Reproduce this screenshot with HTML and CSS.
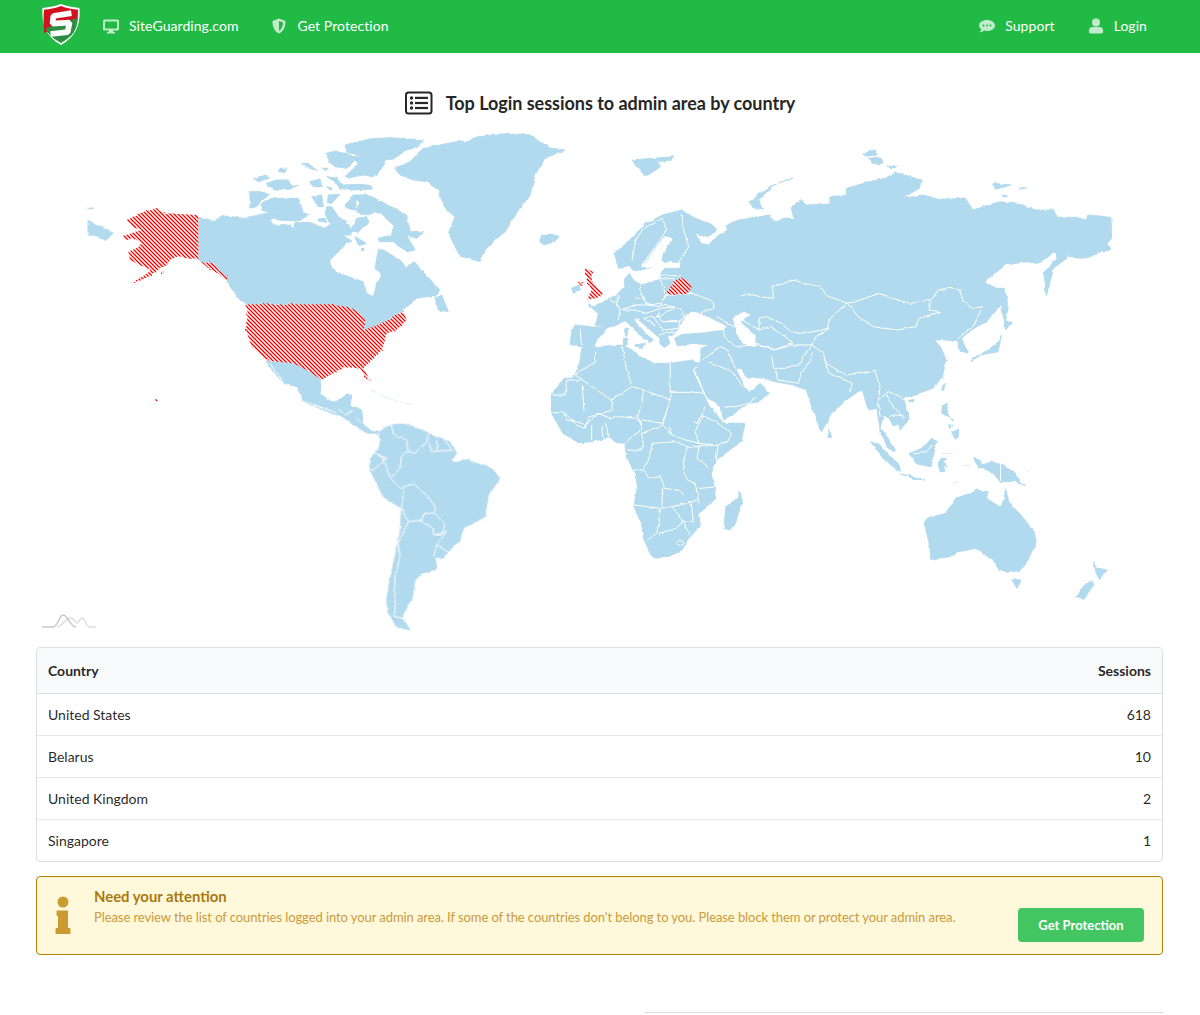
FILE: index.html
```html
<!DOCTYPE html>
<html lang="en">
<head>
<meta charset="utf-8">
<title>Top Login sessions to admin area by country</title>
<link rel="stylesheet" href="styles.css">
</head>
<body>
<header class="topbar">
  <svg class="logo" viewBox="0 0 40 44" aria-hidden="true">
    <path class="logo-edge" d="M20 .5C26 3 32 4 39.500 4.500C40.500 20 37 34 20 43.500C3 34-.5 20 .5 4.500C8 4 14 3 20 .5Z"/>
    <path class="logo-red" d="M20 2.500C26 5 32 6 38 6.500L37.500 17L2.500 31C1.500 23 1.500 14 2 6.500C8 6 14 5 20 2.500Z"/>
    <path class="logo-green" d="M37.800 15C37 28 32 35 20 41.500C12 37 6 32 3.500 26Z"/>
    <polyline class="logo-s" points="31,10 12,13 11,21 29,20 27,30 9,32"/>
  </svg>
  <nav class="nav">
    <a class="nav-item">
      <svg class="nav-icon" viewBox="0 0 16 16" aria-hidden="true"><path d="M1.500 1.500h13A1.500 1.500 0 0 1 16 3v8a1.500 1.500 0 0 1-1.500 1.500H10l.5 1.500h1.500v1.500H4V14h1.500l.5-1.500H1.500A1.500 1.500 0 0 1 0 11V3a1.500 1.500 0 0 1 1.500-1.500ZM2 3.500v7h12v-7Z" fill-rule="evenodd"/></svg>
      <span>SiteGuarding.com</span>
    </a>
    <a class="nav-item">
      <svg class="nav-icon" viewBox="0 0 16 16" aria-hidden="true"><path d="M8 0.500L14.500 3C14.500 9 12.500 13.500 8 15.500C3.500 13.500 1.500 9 1.500 3ZM8 3V13C10.500 11.500 12 8.500 12 4.600Z" fill-rule="evenodd"/></svg>
      <span>Get Protection</span>
    </a>
    <span class="nav-spacer"></span>
    <a class="nav-item">
      <svg class="nav-icon" viewBox="0 0 16 16" aria-hidden="true"><path d="M8 2C12.400 2 16 4.400 16 7.500S12.400 13 8 13C7 13 6 12.900 5 12.600C4 13.600 2.500 14.300 .5 14.300C1.500 13.300 2.200 12.300 2.300 11.200C.9 10.200 0 9 0 7.500C0 4.400 3.600 2 8 2ZM4.500 6.500a1 1 0 1 0 0 2a1 1 0 0 0 0-2ZM8 6.500a1 1 0 1 0 0 2a1 1 0 0 0 0-2ZM11.500 6.500a1 1 0 1 0 0 2a1 1 0 0 0 0-2Z" fill-rule="evenodd"/></svg>
      <span>Support</span>
    </a>
    <a class="nav-item">
      <svg class="nav-icon" viewBox="0 0 16 16" aria-hidden="true"><circle cx="8" cy="4.500" r="4"/><path d="M4.500 9h7A3.500 3.500 0 0 1 15 12.500V14a1.500 1.500 0 0 1-1.500 1.500h-11A1.500 1.500 0 0 1 1 14v-1.500A3.500 3.500 0 0 1 4.500 9Z"/></svg>
      <span>Login</span>
    </a>
  </nav>
</header>

<main class="page">
  <h1 class="title">
    <svg class="title-icon" viewBox="0 0 28 24" aria-hidden="true">
      <rect class="title-frame" x="1" y="1.500" width="25.500" height="21" rx="2.500"/>
      <circle cx="6.500" cy="7" r="1.700"/><circle cx="6.500" cy="12" r="1.700"/><circle cx="6.500" cy="17" r="1.700"/>
      <rect x="10" y="5.800" width="13" height="2.200"/><rect x="10" y="10.900" width="13" height="2.200"/><rect x="10" y="15.900" width="13" height="2.200"/>
    </svg>
    <span>Top Login sessions to admin area by country</span>
  </h1>

  <svg class="map" viewBox="36 133 1127 499" role="img" aria-label="World map of login sessions">
    <defs>
      <filter id="rough" filterUnits="userSpaceOnUse" x="36" y="133" width="1127" height="499" color-interpolation-filters="sRGB">
        <feTurbulence type="fractalNoise" baseFrequency="0.16" numOctaves="2" seed="4" result="noise"/>
        <feDisplacementMap in="SourceGraphic" in2="noise" scale="3" xChannelSelector="R" yChannelSelector="G"/>
      </filter>
      <pattern id="hatch" width="4" height="4" patternUnits="userSpaceOnUse">
        <rect width="4" height="4" fill="#fff"/>
        <path d="M-1 3L1 5M0 0L4 4M3-1L5 1" stroke="#f00" stroke-width="1.300"/>
      </pattern>
      <mask id="hatch-mask" maskUnits="userSpaceOnUse" x="36" y="133" width="1127" height="499">
        <g class="rough hatch-shapes">
          <g transform="translate(80 130) scale(.33333)">
            <polygon points="140,272 175,250 225,237 260,250 350,255 355,262 355,390 320,385 295,378 272,390 262,405 240,415 215,435 180,452 155,458 190,438 215,420 180,405 150,390 145,365 175,352 185,338 165,328 135,330 130,318 155,308 185,300 160,290 145,280"/>
            <polygon points="500,523 745,523 810,532 835,545 855,570 855,600 880,590 925,570 970,543 980,570 950,600 920,610 905,660 865,700 850,715 873,755 860,745 840,715 790,712 725,750 680,720 640,700 590,695 560,690 515,650 498,600"/>
            <polygon points="355,392 375,398 400,398 415,420 440,440 445,455 425,440 410,425 390,420 375,405"/>
            <polygon points="240,425 252,425 250,431 240,431"/>
            <polygon points="226,807 234,807 234,813 226,813"/>
          </g>
          <g transform="translate(560 260) scale(.33333)">
            <polygon points="318,100 340,65 362,52 385,65 395,85 380,102 340,105"/>
            <polygon points="75,25 100,35 90,55 115,85 130,100 110,115 82,118 95,90 75,50"/>
            <polygon points="55,66 68,66 68,74 55,74"/>
          </g>
        </g>
      </mask>
    </defs>

    <g class="rough">
      <!-- Alaska side of Russia, Greenland, Mexico -->
      <g transform="translate(80 130) scale(.33333)">
        <g class="land">
          <polygon points="24,272 60,290 100,310 75,332 50,318 24,312"/>
          <polygon points="24,232 40,235 24,238"/>
          <polygon points="1065,505 1085,495 1105,545 1075,540"/>
          <polygon points="945,115 990,95 1030,55 1080,45 1130,35 1165,35 1180,25 1200,20 1290,10 1350,15 1410,54 1455,60 1395,84 1365,135 1350,195 1305,255 1275,306 1245,330 1215,360 1200,395 1165,385 1140,378 1105,310 1125,260 1095,235 1075,180 1040,155 1000,150 960,135"/>
          <polygon points="560,692 590,695 640,700 680,720 725,750 720,790 760,820 800,795 815,795 810,825 845,840 850,900 820,880 770,845 670,810 650,770 610,760 570,710"/>
        </g>
        <polyline class="gap" points="570,700 595,735 620,775"/>
        <g class="faint">
          <polyline points="870,780 910,795 950,815"/>
          <polyline points="960,815 1000,825"/>
        </g>
      </g>

      <!-- Canada and the Arctic islands -->
      <g transform="translate(250 135) scale(.33333)">
        <g class="land">
          <polygon points="-153,247 -110,257 -75,243 -40,247 -20,250 0,245 50,235 90,240 60,255 70,270 125,270 130,285 135,262 180,262 225,280 240,268 285,255 300,275 305,300 280,300 305,318 290,325 240,375 240,390 265,415 340,440 350,475 370,485 380,450 395,420 375,400 385,345 400,345 450,375 470,400 490,380 570,465 560,480 500,490 460,525 415,555 370,575 345,585 345,555 320,530 290,520 235,510 0,508 -30,495 -60,455 -70,425 -110,395 -155,375"/>
          <polygon points="315,305 350,325 325,332"/>
          <polygon points="335,340 345,342 335,348"/>
          <polygon points="300,190 310,180 345,180 365,185 395,200 440,225 470,240 480,290 520,290 500,310 470,300 495,345 470,350 430,320 385,320 385,310 425,300 430,270 390,235 370,230 355,240 320,232 330,200"/>
          <polygon points="285,210 300,195 315,185 320,225 290,222"/>
          <polygon points="300,290 320,250 350,245 355,265 325,290"/>
          <polygon points="285,30 360,12 420,8 520,18 490,40 470,45 430,72 405,75 395,100 370,125 340,120 290,130 285,125 310,100 325,85 305,65 360,58 320,60 290,52"/>
          <polygon points="230,55 255,48 300,60 315,75 290,100 255,95 235,80"/>
          <polygon points="230,125 260,130 280,150 330,148 365,152 365,162 310,165 270,160 255,140"/>
          <polygon points="90,100 110,100 105,112 85,110"/>
          <polygon points="155,85 180,90 200,105 170,98"/>
          <polygon points="215,100 235,100 225,108"/>
          <polygon points="10,130 50,120 55,130 25,140"/>
          <polygon points="50,145 80,135 115,135 130,155 145,150 120,162 75,165 55,155"/>
          <polygon points="180,140 210,132 215,155 190,155"/>
          <polygon points="230,155 248,160 240,165"/>
          <polygon points="0,170 30,170 60,180 35,195 20,215 0,220"/>
          <polygon points="35,205 65,190 145,190 160,235 180,240 140,258 85,255 50,235 95,230 55,232 35,225"/>
          <polygon points="185,185 215,180 220,215 205,215"/>
          <polygon points="235,180 270,178 245,205 232,203"/>
          <polygon points="230,215 245,215 265,245 280,255 240,265 225,240"/>
          <polygon points="205,252 225,250 230,262 205,258"/>
        </g>
        <polygon class="gap" points="390,270 405,268 400,280"/>
      </g>

      <!-- Central and South America -->
      <g transform="translate(20 400) scale(.33333)">
        <g class="land">
          <polygon points="845,0 900,25 950,40 958,22 1000,30 1025,40 1025,70 1060,95 1080,95 1075,103 1040,98 1005,78 965,48 915,32"/>
          <polygon points="1080,95 1110,75 1150,72 1200,85 1240,110 1290,125 1310,160 1295,180 1340,180 1415,205 1440,235 1405,285 1395,350 1330,385 1320,420 1285,455 1270,475 1245,470 1250,505 1205,520 1185,540 1175,600 1145,650 1170,690 1130,680 1105,640 1100,600 1110,540 1140,400 1145,325 1090,290 1050,210 1050,175 1080,140"/>
        </g>
        <g class="borders">
          <polyline points="955,25 975,45 1000,30"/>
          <polyline points="1010,55 1025,70"/>
          <polyline points="1115,75 1120,105 1160,120 1165,155 1145,165 1140,205 1110,235 1090,175 1065,160"/>
          <polyline points="1165,155 1185,160 1220,125 1225,100"/>
          <polyline points="1225,125 1235,155 1295,150 1275,120"/>
          <polyline points="1250,120 1250,155"/>
          <polyline points="1110,235 1140,265 1180,250 1220,285 1245,320 1245,340 1210,340 1205,365 1240,385 1240,405 1280,395"/>
          <polyline points="1150,265 1145,325 1165,365 1205,360"/>
          <polyline points="1245,340 1275,375 1265,405 1240,405"/>
          <polyline points="1165,365 1135,430 1140,470 1125,530 1125,650 1170,660"/>
          <polyline points="1250,435 1240,470"/>
          <polyline points="1250,435 1285,455"/>
          <polyline points="1280,395 1250,435"/>
          <polyline points="1065,160 1100,175 1060,210 1048,205"/>
        </g>
        <polygon class="gap" points="1295,180 1320,172 1325,180 1305,185"/>
      </g>

      <!-- Asia, Scandinavia and northern Africa -->
      <g transform="translate(540 130) scale(.38314 .33333)">
        <g class="land">
          <polygon points="205,415 195,370 240,325 270,285 320,255 370,240 395,260 450,285 460,300 440,320 405,310 420,340 440,345 460,320 490,300 485,285 520,270 600,255 610,275 640,262 665,272 655,232 680,210 695,225 760,222 755,200 800,195 800,175 860,155 900,145 930,128 995,150 990,175 945,205 1000,195 1040,208 1110,205 1130,240 1200,215 1260,225 1290,240 1340,240 1350,262 1400,262 1425,270 1430,255 1490,262 1492,325 1480,340 1490,358 1445,375 1415,385 1380,382 1378,358 1375,385 1340,415 1322,497 1315,430 1350,385 1345,365 1300,400 1270,395 1215,405 1160,455 1190,475 1215,475 1200,530 1165,575 1140,590 1120,605 1100,625 1115,665 1098,668 1090,635 1060,630 1030,630 1045,650 1060,690 1050,740 1025,775 1000,785 960,800 880,800 845,780 830,785 800,810 760,850 735,905 715,850 695,780 660,765 615,755 580,745 560,740 540,745 525,715 510,715 535,770 545,790 575,760 598,790 570,815 545,820 480,870 470,830 435,800 407,720 420,690 420,655 442,645 399,640 360,648 351,625 373,612 433,605 477,602 490,590 440,560 400,550 368,500 368,395 300,410 255,422 238,420 240,405"/>
          <polygon points="110,650 145,650 215,645 240,660 260,680 300,700 340,700 400,690 415,700 398,722 440,825 480,880 535,880 525,935 460,990 445,1025 455,1075 458,1110 415,1150 418,1190 395,1215 370,1260 340,1278 300,1285 290,1275 270,1225 265,1180 245,1128 255,1070 248,1030 225,980 222,940 200,938 180,923 135,935 100,938 60,910 30,850 30,795 60,750 92,735 105,690"/>
          <polygon points="0,320 30,310 50,320 40,335 10,345 0,335"/>
          <polygon points="240,90 300,85 315,110 275,140"/>
          <polygon points="295,85 350,80 345,90 310,95"/>
          <polygon points="545,215 570,205 580,240 560,235"/>
          <polygon points="560,205 600,170 660,142 610,165 575,205"/>
          <polygon points="840,70 875,60 880,75 850,78"/>
          <polygon points="855,85 890,82 895,100 870,100"/>
          <polygon points="905,105 935,110 915,115"/>
          <polygon points="1180,160 1230,165 1190,178"/>
          <polygon points="1205,195 1220,198 1210,202"/>
          <polygon points="1250,172 1270,175 1255,177"/>
          <polygon points="1212,475 1222,530 1212,590 1205,525"/>
          <polygon points="1210,570 1232,580 1215,600"/>
          <polygon points="1205,615 1195,665 1150,675 1125,695 1130,685 1170,660 1195,635"/>
        </g>
        <g class="gap">
          <polygon points="280,390 325,320 345,325 320,370 315,395 355,400 320,415 300,412 265,410"/>
        </g>
        <g class="borders">
          <polyline points="240,390 250,330 270,295 320,265 330,300 295,360 265,405"/>
          <polyline points="370,250 375,300 388,350 360,400"/>
          <polyline points="505,530 515,500 545,492 575,500 610,505 605,470 665,450 690,462 725,465 750,498 803,520 775,545 755,570 750,595 715,605 680,610 655,605 630,580 590,560 572,565 572,600 555,590 510,555"/>
          <polyline points="803,520 840,508 885,490 920,505 965,520 1020,510 1040,480 1070,472 1095,480 1105,515 1130,535 1155,530 1130,590"/>
          <polyline points="803,520 830,560 870,590 935,600 980,590 990,565 1045,545 1015,540 1020,515"/>
          <polyline points="755,595 720,620 710,645 740,670 745,700 800,735 860,725 885,735 905,770"/>
          <polyline points="572,600 600,590 640,620 660,640 610,660 560,640"/>
          <polyline points="610,660 660,645 710,645 690,675 680,700 640,715 610,715 605,680"/>
          <polyline points="710,670 705,690 680,735 675,760 620,750 615,720"/>
          <polyline points="745,700 755,730 815,760 810,785"/>
          <polyline points="885,735 880,770 850,780"/>
          <polyline points="485,625 510,650 555,645 610,655"/>
          <polyline points="425,690 470,650 490,660 510,715"/>
          <polyline points="440,695 500,725 540,780"/>
          <polyline points="480,830 510,830 545,820 565,800"/>
          <polyline points="1130,590 1090,625"/>
          <polyline points="145,665 145,695 92,735 185,810 240,770 225,715 215,650"/>
          <polyline points="240,770 270,780 340,810 340,700"/>
          <polyline points="340,787 430,787"/>
          <polyline points="340,810 320,880 265,870"/>
          <polyline points="185,810 190,840 130,860 115,895 95,885 65,850"/>
          <polyline points="30,795 65,795 70,750 105,750"/>
          <polyline points="110,765 115,845"/>
          <polyline points="265,820 255,860 265,880"/>
          <polyline points="270,780 265,820"/>
          <polyline points="430,830 410,880 400,875"/>
        </g>
      </g>

      <!-- Continental Europe -->
      <g transform="translate(560 260) scale(.33333)">
        <g class="land">
          <polygon points="365,0 360,25 315,25 300,45 300,58 245,75 222,62 208,40 193,58 195,80 175,100 150,115 100,140 85,135 115,160 108,195 140,205 45,195 35,215 30,255 50,255 70,268 100,262 115,235 140,205 170,195 195,182 205,190 240,225 268,248 280,240 262,225 225,185 225,170 300,235 300,255 315,262 330,250 322,230 345,218 360,200 380,165 405,155 440,165 445,150 470,170 530,160 540,100 440,110 400,60"/>
          <polygon points="35,85 55,75 62,90 40,100"/>
          <polygon points="195,205 205,205 200,230 194,225"/>
          <polygon points="190,235 203,235 200,262 190,258"/>
          <polygon points="225,255 255,250 245,268"/>
        </g>
        <g class="gap">
          <polygon points="360,200 380,165 405,155 430,165 490,205 440,215 370,220"/>
          <polygon points="520,175 555,155 570,165 540,185 565,210 585,225 585,260 550,250 530,220"/>
        </g>
        <g class="land">
          <polygon points="420,155 445,148 452,160 430,165"/>
        </g>
        <g class="borders">
          <polyline points="320,105 345,105 400,100 460,125 462,145 430,155 420,160"/>
          <polyline points="320,105 305,125 300,135 345,140 370,155 365,165"/>
          <polyline points="240,75 248,115 262,135 300,130 320,105 300,58"/>
          <polyline points="180,150 225,135 262,135"/>
          <polyline points="175,105 170,130 180,150 175,180"/>
          <polyline points="225,115 250,112 262,135"/>
          <polyline points="262,135 300,140"/>
          <polyline points="180,150 225,150 260,160 300,145 345,140"/>
          <polyline points="250,170 300,170 345,140"/>
          <polyline points="300,145 295,170 310,185 365,180 375,160"/>
          <polyline points="310,185 360,185 355,205 310,210"/>
          <polyline points="280,170 310,215"/>
          <polyline points="250,175 285,195"/>
          <polyline points="295,225 345,215"/>
          <polyline points="60,205 65,255"/>
          <polyline points="145,115 165,130"/>
          <polyline points="170,125 180,110"/>
          <polyline points="300,45 362,48"/>
          <polyline points="300,58 340,55 350,75"/>
          <polyline points="470,170 530,205 535,225"/>
          <polyline points="490,205 495,235"/>
        </g>
      </g>

      <!-- South-East Asia -->
      <g transform="translate(850 350) scale(.33333)">
        <g class="land">
          <polygon points="30,90 75,60 165,120 160,145 180,205 150,240 145,225 160,215 130,228 118,205 100,195 90,235 80,175 55,180 40,130"/>
          <polygon points="90,235 115,265 135,305 115,295 90,245"/>
          <polygon points="177,152 192,148 190,158 180,158"/>
          <polygon points="280,105 287,100 280,122 275,118"/>
          <polygon points="278,165 290,160 292,190 310,215 298,200 275,190"/>
          <polygon points="305,245 325,240 325,262 315,268"/>
          <polygon points="295,225 305,225 300,235"/>
          <polygon points="62,275 90,285 120,320 150,345 150,365 130,350 95,320"/>
          <polygon points="180,310 215,295 245,265 262,275 250,290 252,310 240,350 195,340"/>
          <polygon points="152,372 185,378 225,390 195,387"/>
          <polygon points="270,325 290,325 280,335 295,350 280,345 285,365 270,365 265,345"/>
          <polygon points="370,325 390,330 395,345 430,335 455,345 490,365 510,395 525,408 495,392 475,395 450,395 430,370 385,350"/>
        </g>
        <g class="borders">
          <polyline points="45,70 75,60 90,115 85,150 90,200"/>
          <polyline points="85,150 115,125 160,145"/>
          <polyline points="110,135 130,170 165,205"/>
          <polyline points="120,200 160,195"/>
          <polyline points="190,312 225,308 250,285"/>
          <polyline points="452,345 452,395"/>
        </g>
        <g class="faint">
          <polyline points="305,400 325,395"/>
          <polyline points="335,345 360,347"/>
          <polyline points="530,365 548,358"/>
          <polyline points="275,310 310,310"/>
        </g>
      </g>

      <!-- Southern Africa and Oceania -->
      <g transform="translate(540 400) scale(.38314 .33333)">
        <g class="land">
          <polygon points="520,275 528,300 510,370 495,390 480,385 485,320 515,295"/>
          <polygon points="752,87 762,110 752,115"/>
          <polygon points="1215,265 1225,310 1255,345 1290,395 1295,425 1270,490 1250,515 1200,512 1180,475 1160,465 1140,445 1090,455 1070,470 1020,478 1018,440 1003,370 1010,355 1060,340 1085,295 1125,280 1140,270 1170,275 1165,295 1200,320 1210,310"/>
          <polygon points="1232,540 1255,540 1245,565"/>
          <polygon points="1445,485 1458,505 1480,510 1460,540 1452,520"/>
          <polygon points="1440,540 1445,555 1420,595 1398,590 1410,570"/>
        </g>
        <g class="borders">
          <polyline points="30,40 60,35 70,60 95,65 120,75 150,40 185,55 205,50 250,55 265,70 265,90 240,110 222,130"/>
          <polyline points="135,75 135,120"/>
          <polyline points="160,75 165,115"/>
          <polyline points="170,65 180,110"/>
          <polyline points="265,100 270,130 265,150 230,150"/>
          <polyline points="335,80 345,105 380,120 415,130 405,95 425,45 470,75 500,100 490,125 460,135 410,130"/>
          <polyline points="265,100 320,75 345,105"/>
          <polyline points="320,75 330,40"/>
          <polyline points="292,130 355,125 385,140 375,180 375,215 385,240 405,250 410,275 415,310"/>
          <polyline points="292,130 285,175 270,210 245,210"/>
          <polyline points="270,210 285,235 315,230 325,265 365,272 375,285"/>
          <polyline points="385,140 415,140 410,175 440,205"/>
          <polyline points="415,140 465,135 460,180"/>
          <polyline points="245,315 315,325 345,320 385,310 415,295"/>
          <polyline points="415,265 455,262"/>
          <polyline points="320,265 318,320"/>
          <polyline points="315,325 305,400 280,420"/>
          <polyline points="345,320 370,360 400,365 395,310"/>
          <polyline points="310,400 355,385 375,365 390,405"/>
          <polygon points="355,430 365,420 375,428 365,440"/>
        </g>
      </g>
    </g>

    <rect class="hatch-fill" x="36" y="133" width="1127" height="499"/>

    <g class="credit">
      <path class="credit-soft" d="M57 627C62 627 65 618 71 618C74 618 75 623 77 623C79 623 80 618 82 618C85 618 86 627 90 627H96"/>
      <path class="credit-line" d="M42 627H53C58 627 59 615 63 615C68 615 70 627 76 627"/>
    </g>
  </svg>

  <table class="sessions">
    <thead>
      <tr><th>Country</th><th class="num">Sessions</th></tr>
    </thead>
    <tbody>
      <tr><td>United States</td><td class="num">618</td></tr>
      <tr><td>Belarus</td><td class="num">10</td></tr>
      <tr><td>United Kingdom</td><td class="num">2</td></tr>
      <tr><td>Singapore</td><td class="num">1</td></tr>
    </tbody>
  </table>

  <section class="alert">
    <svg class="alert-icon" viewBox="0 0 16 40" aria-hidden="true">
      <circle cx="8" cy="6" r="5.500"/>
      <path d="M2.500 14.500h9.500a1 1 0 0 1 1 1V32h1.500a1 1 0 0 1 1 1v4a1 1 0 0 1-1 1H1.500a1 1 0 0 1-1-1v-4a1 1 0 0 1 1-1H3v-12H2.500a1 1 0 0 1-1-1v-3.500a1 1 0 0 1 1-1Z"/>
    </svg>
    <div class="alert-body">
      <div class="alert-title">Need your attention</div>
      <p class="alert-text">Please review the list of countries logged into your admin area. If some of the countries don't belong to you. Please block them or protect your admin area.</p>
    </div>
    <a class="alert-button">Get Protection</a>
  </section>

  <div class="footer-rule"></div>
</main>
</body>
</html>
```
FILE: styles.css
```css
html, body {
  margin: 0;
  padding: 0;
}
body {
  font-family: Lato, "Liberation Sans", sans-serif;
  font-size: 14px;
  line-height: 20px;
  color: rgba(0, 0, 0, .87);
  background: #fff;
  overflow: hidden;
}
.topbar {
  display: flex;
  align-items: flex-start;
  height: 53px;
  padding: 3px 53px 0 42px;
  box-sizing: border-box;
  background: #21ba45;
}
.logo {
  flex: none;
  width: 38px;
  height: 43px;
}
.logo-edge { fill: #fff; }
.logo-red { fill: #d2121f; }
.logo-green { fill: #2e8b41; }
.logo-s {
  fill: none;
  stroke: #fff;
  stroke-width: 6;
  stroke-linejoin: bevel;
}
.nav {
  flex: 1;
  display: flex;
  gap: 33px;
  height: 46px;
  margin-left: 23px;
}
.nav-spacer { flex: 1; margin-right: -33px; }
.nav-item {
  display: flex;
  align-items: center;
  gap: 10px;
  color: #fff;
  letter-spacing: .06px;
}
.nav-icon {
  flex: none;
  width: 16px;
  height: 16px;
  fill: #fff;
  opacity: .72;
}
.page {
  padding: 0 37px 0 36px;
}
.title {
  display: flex;
  justify-content: center;
  align-items: center;
  gap: 13px;
  height: 80px;
  margin: 0;
  padding: 20px 0 0 1px;
  box-sizing: border-box;
  font-size: 18px;
  font-weight: 700;
  line-height: 24px;
  letter-spacing: -.03px;
  color: #262626;
}
.title-icon {
  width: 28px;
  height: 24px;
  fill: #262626;
}
.title-frame {
  fill: none;
  stroke: #262626;
  stroke-width: 2;
}
.map {
  display: block;
  width: 1127px;
  height: 499px;
  margin-bottom: 15px;
}
.rough { filter: url(#rough); }
.land polygon {
  fill: #b2daee;
  stroke: #b2daee;
  stroke-width: 1;
  vector-effect: non-scaling-stroke;
}
.hatch-shapes polygon { fill: #fff; }
.hatch-fill {
  fill: url(#hatch);
  mask: url(#hatch-mask);
}
.borders polyline,
.borders polygon {
  fill: none;
  stroke: #fff;
  stroke-width: 1;
  stroke-linejoin: round;
  vector-effect: non-scaling-stroke;
}
.gap, .gap polygon {
  fill: #fff;
  stroke: #fff;
  stroke-width: 1;
  vector-effect: non-scaling-stroke;
}
polyline.gap { fill: none; }
.faint polyline {
  fill: none;
  stroke: #dceef7;
  stroke-width: 1;
  vector-effect: non-scaling-stroke;
}
.credit path {
  fill: none;
  stroke-width: 1.500;
}
.credit-line { stroke: #c8c8c8; }
.credit-soft { stroke: #dedede; }
.sessions {
  width: 100%;
  border: 1px solid #dedede;
  border-radius: 4px;
  border-collapse: separate;
  border-spacing: 0;
}
.sessions th {
  height: 46px;
  padding: 0 11px;
  box-sizing: border-box;
  background: #f9fafb;
  border-bottom: 1px solid #dedede;
  text-align: left;
  font-weight: 700;
}
.sessions th:first-child { border-top-left-radius: 3px; }
.sessions th:last-child { border-top-right-radius: 3px; }
.sessions td {
  height: 42px;
  padding: 0 11px;
  box-sizing: border-box;
  border-bottom: 1px solid #e8e8e8;
}
.sessions tr:last-child td {
  height: 41px;
  border-bottom: 0;
}
.sessions .num { text-align: right; }
.alert {
  display: flex;
  align-items: flex-start;
  height: 79px;
  margin-top: 14px;
  padding: 9px 18px 0 18px;
  box-sizing: border-box;
  border: 1px solid #b58105;
  border-radius: 4px;
  background: #fff8db;
}
.alert-icon {
  flex: none;
  width: 16px;
  height: 40px;
  margin-top: 10px;
  fill: #c99b30;
}
.alert-body {
  flex: 1;
  margin-left: 23px;
}
.alert-title {
  font-size: 14.860px;
  line-height: 21px;
  font-weight: 700;
  color: #a87a0e;
}
.alert-text {
  margin: 0;
  font-size: 13px;
  letter-spacing: -.08px;
  color: #c99b3c;
}
.alert-button {
  flex: none;
  width: 126px;
  height: 34px;
  margin-top: 22px;
  border-radius: 4px;
  background: #43c561;
  color: #fff;
  font-size: 13px;
  font-weight: 700;
  line-height: 34px;
  text-align: center;
}
.footer-rule {
  height: 1px;
  margin: 57px 0 1px 609px;
  background: #dddddd;
}
```
